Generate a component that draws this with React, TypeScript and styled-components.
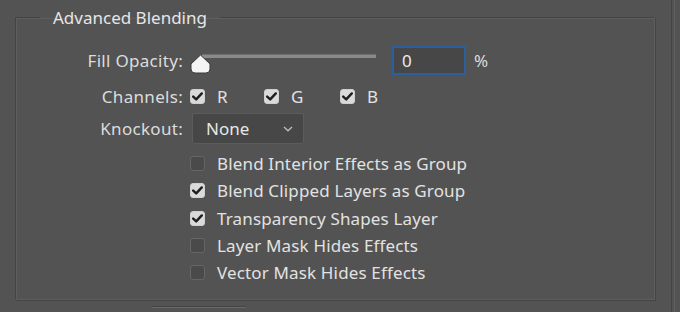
import React from "react";
import styled, { createGlobalStyle } from "styled-components";

const Global = createGlobalStyle`
  html, body { margin: 0; padding: 0; background: #535353; }
  body { width: 680px; height: 312px; overflow: hidden; font-family: "Noto Sans", "Open Sans", sans-serif; }
`;

const Page = styled.div`
  display: flex;
  width: 680px;
  height: 312px;
  overflow: hidden;
  background: #535353;
  color: #e4e4e4;
`;

const Main = styled.div`
  width: 670px;
  display: flex;
  flex-direction: column;
`;

const EdgeLines = styled.div`
  width: 4px;
  height: 100%;
  border-left: 1px solid #454545;
  border-right: 1px solid #5f5f5f;
  box-sizing: border-box;
  margin-left: 1px;
`;

const Fieldset = styled.fieldset`
  flex: none;
  margin: 6px 0 0 15px;
  width: 640px;
  height: 294px;
  box-sizing: border-box;
  padding: 0;
  border-color: #444 #5e5e5e #5e5e5e #444;
  border-style: solid;
  border-width: 1px;
  box-shadow: inset 1px 1px 0 #5e5e5e, 1px 1px 0 #444;
`;

const Legend = styled.legend`
  margin-left: 24px;
  padding: 0 13px;
  font-size: 17px;
  line-height: 23px;
  color: #e6e6e6;
`;

const Body = styled.div`
  display: flex;
  flex-direction: column;
  padding-top: 17px;
`;

const Row = styled.div<{ $h: number; $mt?: number }>`
  display: flex;
  align-items: center;
  height: ${(p) => p.$h}px;
  margin-top: ${(p) => p.$mt ?? 0}px;
`;

const Label = styled.div`
  width: 167px;
  text-align: right;
  font-size: 17px;
  letter-spacing: 0.3px;
  color: #dcdcdc;
  margin-right: 7px;
`;

const Slider = styled.div`
  position: relative;
  width: 186px;
  height: 28px;
`;

const Track = styled.div`
  position: absolute;
  left: 12px;
  right: 0;
  top: 8px;
  height: 3px;
  background: #8a8a8a;
  border-top: 1px solid #6e6e6e;
`;

const Thumb = styled.svg`
  position: absolute;
  left: 0;
  top: 8px;
`;

const NumInput = styled.div`
  width: 74px;
  height: 29px;
  box-sizing: border-box;
  margin-left: 16px;
  border: 2px solid #2b5f9e;
  background: #474747;
  font-size: 17px;
  color: #ececec;
  padding-left: 8px;
  display: flex;
  align-items: center;
`;

const Unit = styled.span`
  margin-left: 8px;
  font-size: 17px;
  color: #dcdcdc;
`;

const Box = styled.span<{ $on: boolean }>`
  width: 15px;
  height: 15px;
  box-sizing: border-box;
  border-radius: 3px;
  display: inline-flex;
  align-items: center;
  justify-content: center;
  background: ${(p) => (p.$on ? "#dadada" : "#4a4a4a")};
  border: 1px solid ${(p) => (p.$on ? "#cfcfcf" : "#666")};
  flex: none;
`;

const Check = styled.label<{ $w?: number }>`
  display: flex;
  align-items: center;
  width: ${(p) => (p.$w ? `${p.$w}px` : "auto")};
  font-size: 17px;
  letter-spacing: 0.15px;
  color: #e2e2e2;
`;

const CheckText = styled.span`
  margin-left: 12px;
`;

const Select = styled.div`
  width: 112px;
  height: 31px;
  box-sizing: border-box;
  margin-left: 2px;
  background: #474747;
  border: 1px solid #5c5c5c;
  border-radius: 2px;
  display: flex;
  align-items: center;
  justify-content: space-between;
  padding: 0 9px 0 13px;
  font-size: 17px;
  color: #e6e6e6;
`;

const Indent = styled.div`
  width: 174px;
`;

const Footer = styled.div`
  flex: none;
  display: flex;
  padding-left: 152px;
  margin-top: 7px;
`;

const FootButton = styled.div`
  width: 94px;
  height: 10px;
  border-top: 1px solid #6a6a6a;
  box-shadow: 0 -1px 0 #444;
`;

const Tick = () => (
  <svg width="11" height="9" viewBox="0 0 11 9">
    <path d="M1.2 4.6 L4.2 7.4 L9.8 1.4" fill="none" stroke="#1e1e1e" strokeWidth="2.4" strokeLinecap="round" strokeLinejoin="round" />
  </svg>
);

const CB = ({ on, children, w }: { on: boolean; children: React.ReactNode; w?: number }) => (
  <Check $w={w}>
    <Box $on={on}>{on && <Tick />}</Box>
    <CheckText>{children}</CheckText>
  </Check>
);

const Chevron = () => (
  <svg width="12" height="8" viewBox="0 0 12 8">
    <path d="M2 2 L6 5.8 L10 2" fill="none" stroke="#bdbdbd" strokeWidth="1.3" />
  </svg>
);

const options: [string, boolean][] = [
  ["Blend Interior Effects as Group", false],
  ["Blend Clipped Layers as Group", true],
  ["Transparency Shapes Layer", true],
  ["Layer Mask Hides Effects", false],
  ["Vector Mask Hides Effects", false],
];

export default function App() {
  return (
    <>
      <Global />
      <Page>
        <Main>
          <Fieldset>
            <Legend>Advanced Blending</Legend>
            <Body>
              <Row $h={28}>
                <Label>Fill Opacity:</Label>
                <Slider>
                  <Track />
                  <Thumb width="21" height="20" viewBox="0 0 21 20">
                    <path d="M10.5 1 L20 10 L20 15 Q20 19 16 19 L5 19 Q1 19 1 15 L1 10 Z" fill="#f4f4f4" stroke="#3a3a3a" strokeWidth="1" />
                  </Thumb>
                </Slider>
                <NumInput>0</NumInput>
                <Unit>%</Unit>
              </Row>
              <Row $h={20} $mt={12}>
                <Label>Channels:</Label>
                <CB on w={74}>R</CB>
                <CB on w={76}>G</CB>
                <CB on>B</CB>
              </Row>
              <Row $h={31} $mt={7}>
                <Label>Knockout:</Label>
                <Select>
                  None
                  <Chevron />
                </Select>
              </Row>
              {options.map(([t, on], i) => (
                <Row key={t} $h={27.25} $mt={i === 0 ? 6 : 0}>
                  <Indent />
                  <CB on={on}>{t}</CB>
                </Row>
              ))}
            </Body>
          </Fieldset>
          <Footer>
            <FootButton />
          </Footer>
        </Main>
        <EdgeLines />
      </Page>
    </>
  );
}
